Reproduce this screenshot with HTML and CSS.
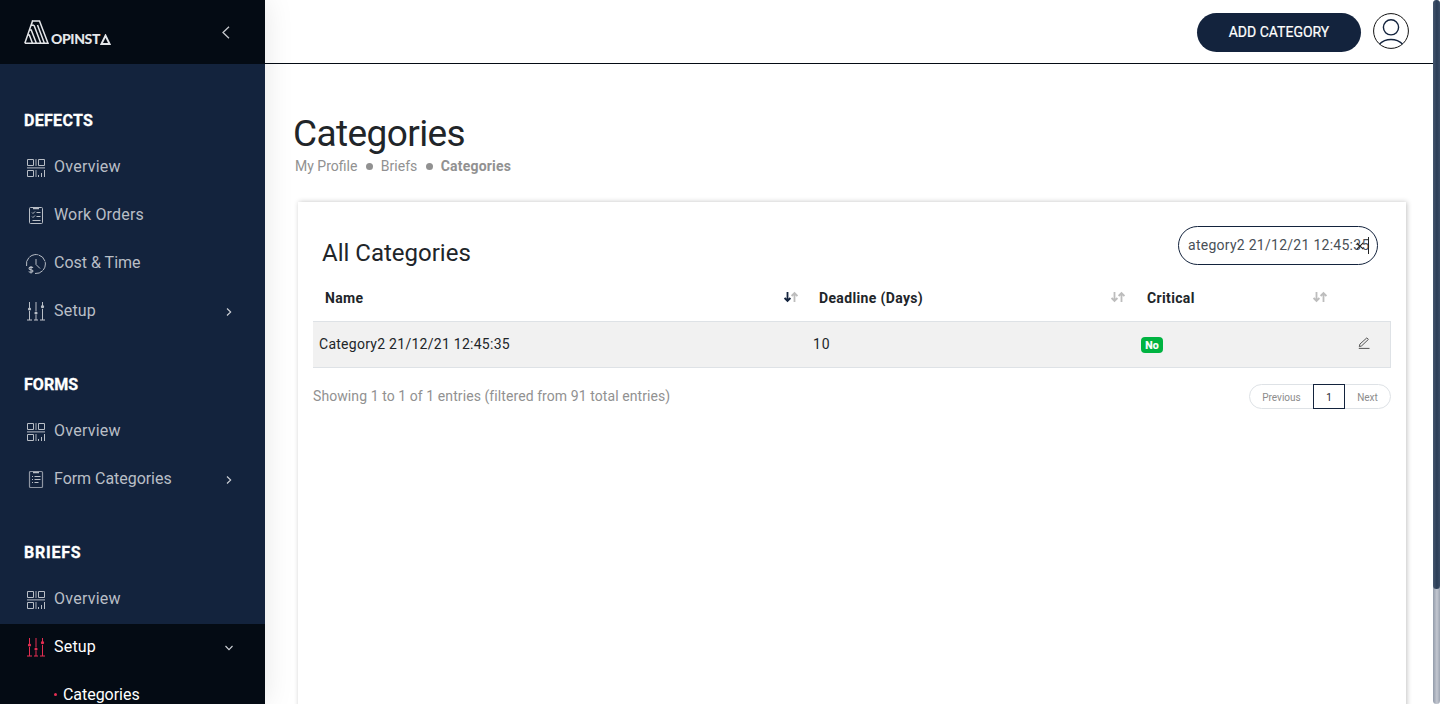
FILE: index.html
```html
<!DOCTYPE html>
<html lang="en">
<head>
<meta charset="utf-8">
<title>Opinsta - Categories</title>
<link rel="stylesheet" href="styles.css">
</head>
<body>
<svg class="defs" width="0" height="0">
  <symbol id="i-grid" viewBox="0 0 20 20"><g fill="none" stroke="currentColor"><path d="M1.500 1.500h6v6h-6zM12.500 1.500h6v6h-6zM1.500 12.500h6v6h-6z"/><path d="M1 9.900h18"/><path d="M10 1v7M10 12v7" stroke-width="1.800" opacity=".5"/><path d="M12.500 17v2M15.500 15v4M18.500 12v7"/></g></symbol>
  <symbol id="i-orders" viewBox="0 0 20 20"><g fill="none" stroke="currentColor"><rect x="3.500" y="1.500" width="13" height="16" rx="1"/><path d="M7 2.500h6" stroke-width="1.500"/><path d="M6 6.500l1 1 2-2M6 10.500l1 1 2-2M10.500 6.500h4M10.500 10.500h4M6.500 14.500h8"/></g></symbol>
  <symbol id="i-form" viewBox="0 0 20 20"><g fill="none" stroke="currentColor"><rect x="3.500" y="1.500" width="13" height="16" rx="1" stroke-width="1.200" opacity=".75"/><path d="M7 2.500h6" stroke-width="1.500"/><path d="M8.500 6.500h6M8.500 9.500h6M8.500 12.500h4M6 6.500h1M6 9.500h1M6 12.500h1"/></g></symbol>
  <symbol id="i-cost" viewBox="0 0 20 20"><g fill="none" stroke="currentColor"><path d="M.6 12A9.500 9.500 0 1 1 9 19.500" stroke-dasharray="9 .7"/><path d="M10 5v5.500l4 4"/><path d="M7 13.700c-.5-.8-4-1-4 .7 0 1.900 4 .8 4 2.700 0 1.600-3.500 1.500-4.300.4M5 12v7.500" stroke-width="1.100"/></g></symbol>
  <symbol id="i-setup" viewBox="0 0 20 20"><g fill="none" stroke="currentColor"><path d="M3.500 0v6M3.500 9v9M16.500 0v4M16.500 7v11"/><path d="M10 0v9M10 13v5" stroke-width="1.800" opacity=".55"/><path d="M1 18h5M8 18h4M14 18h5" stroke-width="1.600" opacity=".7"/></g><g fill="currentColor"><circle cx="3.500" cy="7" r="1.600"/><circle cx="10" cy="11" r="1.600"/><circle cx="16.500" cy="4.700" r="1.600"/></g></symbol>
  <symbol id="i-sort" viewBox="0 0 14 12"><g fill="none" stroke-width="1.800"><path class="down" d="M3.500 1v9M.6 7l2.900 3 2.900-3"/><path class="up" d="M10.500 11V2M7.600 5l2.900-3 2.900 3"/></g></symbol>
  <symbol id="i-chev" viewBox="0 0 8 8"><path d="M2 .5L5.700 4 2 7.500" fill="none" stroke="currentColor" stroke-width="1.100"/></symbol>
</svg>
<div class="app">
  <aside class="sidebar">
    <div class="brand">
      <div class="logo">
        <svg width="25" height="24" viewBox="0 0 25 24" fill="none" stroke="#e4e6e9" stroke-width="1.500"><path d="M.8 23.200L8.500.9h7L24 23.200H16.800L10 5.200M.8 23.200h16M8.500.9L7.300 5.200h2.700M5.600 9.700l1.600.2 5.200 13.300M4 14.800l1.300.2 3.200 8.200M13.500 5l6.800 18"/></svg>
        <span class="wordmark">OPINST<svg width="11" height="11" viewBox="0 0 11 11"><path d="M1.500 9.900l4-8.300 4 8.300z" fill="none" stroke="#e4e6e9" stroke-width="2"/></svg></span>
      </div>
      <svg class="collapse" width="9" height="13" viewBox="0 0 9 13"><path d="M8 .8L2 6.500l6 5.700" fill="none" stroke="#c6c9cd" stroke-width="1.300"/></svg>
    </div>
    <nav>
      <h3 class="t-defects">DEFECTS</h3>
      <a class="item"><svg class="ico"><use href="#i-grid"/></svg><span class="t-over">Overview</span></a>
      <a class="item"><svg class="ico"><use href="#i-orders"/></svg><span class="t-work">Work Orders</span></a>
      <a class="item"><svg class="ico"><use href="#i-cost"/></svg><span class="t-cost">Cost &amp; Time</span></a>
      <a class="item"><svg class="ico"><use href="#i-setup"/></svg><span class="t-setup">Setup</span><svg class="chev"><use href="#i-chev"/></svg></a>
      <h3 class="t-forms">FORMS</h3>
      <a class="item"><svg class="ico"><use href="#i-grid"/></svg><span class="t-over">Overview</span></a>
      <a class="item"><svg class="ico"><use href="#i-form"/></svg><span class="t-formcat">Form Categories</span><svg class="chev"><use href="#i-chev"/></svg></a>
      <h3 class="t-briefs">BRIEFS</h3>
      <a class="item"><svg class="ico"><use href="#i-grid"/></svg><span class="t-over">Overview</span></a>
      <a class="item active"><svg class="ico"><use href="#i-setup"/></svg><span class="t-setup">Setup</span><svg class="chev open"><use href="#i-chev"/></svg></a>
      <a class="item active sub"><i class="bullet"></i><span class="t-cat">Categories</span></a>
    </nav>
  </aside>
  <div class="main">
    <header class="topbar">
      <button class="add"><span>ADD CATEGORY</span></button>
      <svg class="avatar" width="36" height="36" viewBox="0 0 36 36" fill="none"><circle cx="18" cy="18" r="17.400" stroke="#111"/><circle cx="18" cy="14.300" r="7.600" stroke="#13233d" stroke-width="1.400"/><path d="M6.500 31c6-6 17-6 23 0" stroke="#13233d" stroke-width="1.400"/></svg>
    </header>
    <main class="content">
      <h1><span>Categories</span></h1>
      <div class="crumbs"><span class="c1">My Profile</span><i></i><span class="c2">Briefs</span><i></i><b>Categories</b></div>
      <section class="card">
        <div class="card-head">
          <h2>All Categories</h2>
          <div class="search"><span class="query">ategory2 21/12/21 12:45:35</span><i class="caret"></i><svg class="clear" width="8" height="8" viewBox="0 0 8 8"><path d="M.8.8l6.400 6.400M7.200.8L.8 7.200" stroke="#222" stroke-width="1.100"/></svg></div>
        </div>
        <div class="grid thead">
          <div class="th"><b class="h1c">Name</b><svg class="sort asc"><use href="#i-sort"/></svg></div>
          <div class="th"><b class="h2c">Deadline (Days)</b><svg class="sort"><use href="#i-sort"/></svg></div>
          <div class="th"><b class="h3c">Critical</b><svg class="sort"><use href="#i-sort"/></svg></div>
          <div></div>
        </div>
        <div class="grid row">
          <div class="td"><span class="name">Category2 21/12/21 12:45:35</span></div>
          <div class="td"><span class="ten">10</span></div>
          <div class="td"><span class="badge">No</span></div>
          <div class="td edit"><svg width="12" height="12" viewBox="0 0 12 12" fill="none" stroke="#555"><path d="M.8 11.400h10.700M1.300 9.700l.6-2.600L8.800.9l1.600 1.500-6.700 6.400z"/></svg></div>
        </div>
        <div class="foot">
          <span class="info">Showing 1 to 1 of 1 entries (filtered from 91 total entries)</span>
          <div class="pager"><span class="prev">Previous</span><span class="page">1</span><span class="next">Next</span></div>
        </div>
      </section>
    </main>
  </div>
  <div class="scroll"><div class="thumb"></div></div>
</div>
</body>
</html>
```

FILE: styles.css
```css
* { box-sizing: border-box; }
body { margin: 0; font-family: Roboto, "Liberation Sans", sans-serif; color: #212529; background: #fff; overflow: hidden; }
h1, h2, h3 { margin: 0; font-weight: 400; }
.defs { position: absolute; }
.app { display: flex; height: 704px; overflow: hidden; }
.sidebar { width: 265px; flex: none; background: #13233d; color: #b9bec6; box-shadow: 0 0 28px rgba(0,0,0,.1); z-index: 1; overflow: hidden; }
.brand { height: 64px; background: #040b14; display: flex; justify-content: space-between; padding: 20px 35px 0 24px; }
.logo { display: flex; height: 24px; }
.wordmark { display: flex; align-items: center; font: 900 14px/14px Lato, sans-serif; letter-spacing: -.4px; color: #e4e6e9; margin: 12px 0 0 2px; height: 14px; }
.collapse { margin-top: 6px; }
nav { padding-top: 6px; }
h3 { height: 74px; padding: 41px 0 0 24px; font-size: 16px; line-height: 20px; font-weight: 700; color: #fff; -webkit-text-stroke: .3px #fff; }
h3:not(:first-child) { height: 72px; padding-top: 39px; }
.t-defects { letter-spacing: .3px; }
.t-forms { letter-spacing: .05px; }
.t-briefs { letter-spacing: .75px; }
.item { display: flex; align-items: center; height: 48px; padding: 0 32px 4px 26px; font-size: 16px; }
.item span { white-space: nowrap; }
.t-over { letter-spacing: .25px; }
.t-work { letter-spacing: .17px; }
.t-setup { letter-spacing: .2px; }
.t-formcat, .t-cat { letter-spacing: -.04px; }
.ico { width: 20px; height: 20px; margin: 3px 8px 0 0; flex: none; }
.chev { width: 8px; height: 8px; margin: 3px 0 0 auto; color: #d0d3d8; }
.chev.open { transform: rotate(90deg); }
.active { background: #040b14; color: #fff; }
.active .ico { color: #e52e52; }
.sub { padding-left: 54px; }
.bullet { width: 3px; height: 3px; border-radius: 50%; background: #e52e52; margin-right: 6px; }
.main { width: 1168px; flex: none; }
.topbar { height: 64px; border-bottom: 1px solid #040b14; display: flex; justify-content: flex-end; padding: 13px 24px 0 0; gap: 12px; }
.add { width: 164px; height: 39px; border: 0; border-radius: 20px; background: #13233d; color: #fff; font: 400 14px Roboto, sans-serif; padding: 0 0 2px; -webkit-text-stroke: .2px #fff; }
.content { padding: 48px 27px 0 28px; }
h1 { font-size: 37px; line-height: 44px; letter-spacing: -.6px; }
.crumbs { display: flex; align-items: center; height: 20px; font-size: 14px; color: #919191; padding-left: 2px; white-space: nowrap; }
.crumbs i { width: 7px; height: 7px; border-radius: 50%; background: #919191; margin: 0 7.500px 0 9px; }
.crumbs b { letter-spacing: .2px; }
.card { margin: 26px 0 0 5px; width: 1108px; height: 520px; padding: 24px 15px; box-shadow: 1px 0 5px rgba(0,0,0,.24); }
.card-head { display: flex; justify-content: space-between; padding: 0 13px 0 9px; height: 50px; }
h2 { font-size: 24px; line-height: 54px; }
.search { position: relative; width: 200px; height: 39px; border: 1px solid #13233d; border-radius: 20px; padding-left: 9px; font-size: 14px; line-height: 37px; color: #495057; white-space: nowrap; }
.query, .name { letter-spacing: .27px; }
.ten { letter-spacing: .8px; }
.h1c, .h2c, .h3c { letter-spacing: .35px; }
.caret { position: absolute; left: 189px; top: 10px; width: 1px; height: 17px; background: #222; }
.clear { position: absolute; left: 177px; top: 15px; }
.grid { display: grid; grid-template-columns: 494px 328px 200px 1fr; }
.thead { height: 45px; font-size: 14px; padding-bottom: 2px; }
.th { display: flex; align-items: center; justify-content: space-between; padding: 0 9px 0 12px; }
.th:nth-child(2) { padding-right: 10px; }
.th:nth-child(3) { padding-right: 8px; }
.sort { width: 14px; height: 12px; margin-top: -2px; }
.asc { --down: #13233d; }
.down { stroke: var(--down, #bdbdbd); }
.up { stroke: #bdbdbd; }
.row { height: 47px; background: #f1f1f1; border: 1px solid #dee2e6; border-left: 0; font-size: 14px; }
.td { display: flex; align-items: center; padding: 0 0 2px 6px; }
.badge { width: 22px; height: 16px; border-radius: 4px; background: #00b341; color: #fff; font-size: 10.500px; font-weight: 700; line-height: 17px; text-align: center; margin-top: 2px; -webkit-text-stroke: .2px #fff; }
.edit { padding: 0 0 4px 23px; }
.foot { display: flex; justify-content: space-between; padding-top: 16px; }
.info { font-size: 14px; line-height: 25px; color: #919191; letter-spacing: .08px; }
.pager { display: flex; width: 142px; height: 25px; border: 1px solid #dee2e6; border-radius: 13px; font-size: 10px; line-height: 25px; color: #8c8c8c; }
.prev { width: 63px; text-align: center; }
.page { width: 32px; height: 25px; margin-top: -1px; border: 1px solid #13233d; color: #212529; text-align: center; background: #fff; }
.next { flex: 1; text-align: center; }
.scroll { width: 7px; height: 704px; flex: none; border-radius: 4px; background: linear-gradient(90deg, #929baa, #c3c7d0 55%, #9da5b2); }
.thumb { height: 589px; border-radius: 4px; background: linear-gradient(90deg, #45566e, #2b3d56 55%, #3b4d66); }
```
